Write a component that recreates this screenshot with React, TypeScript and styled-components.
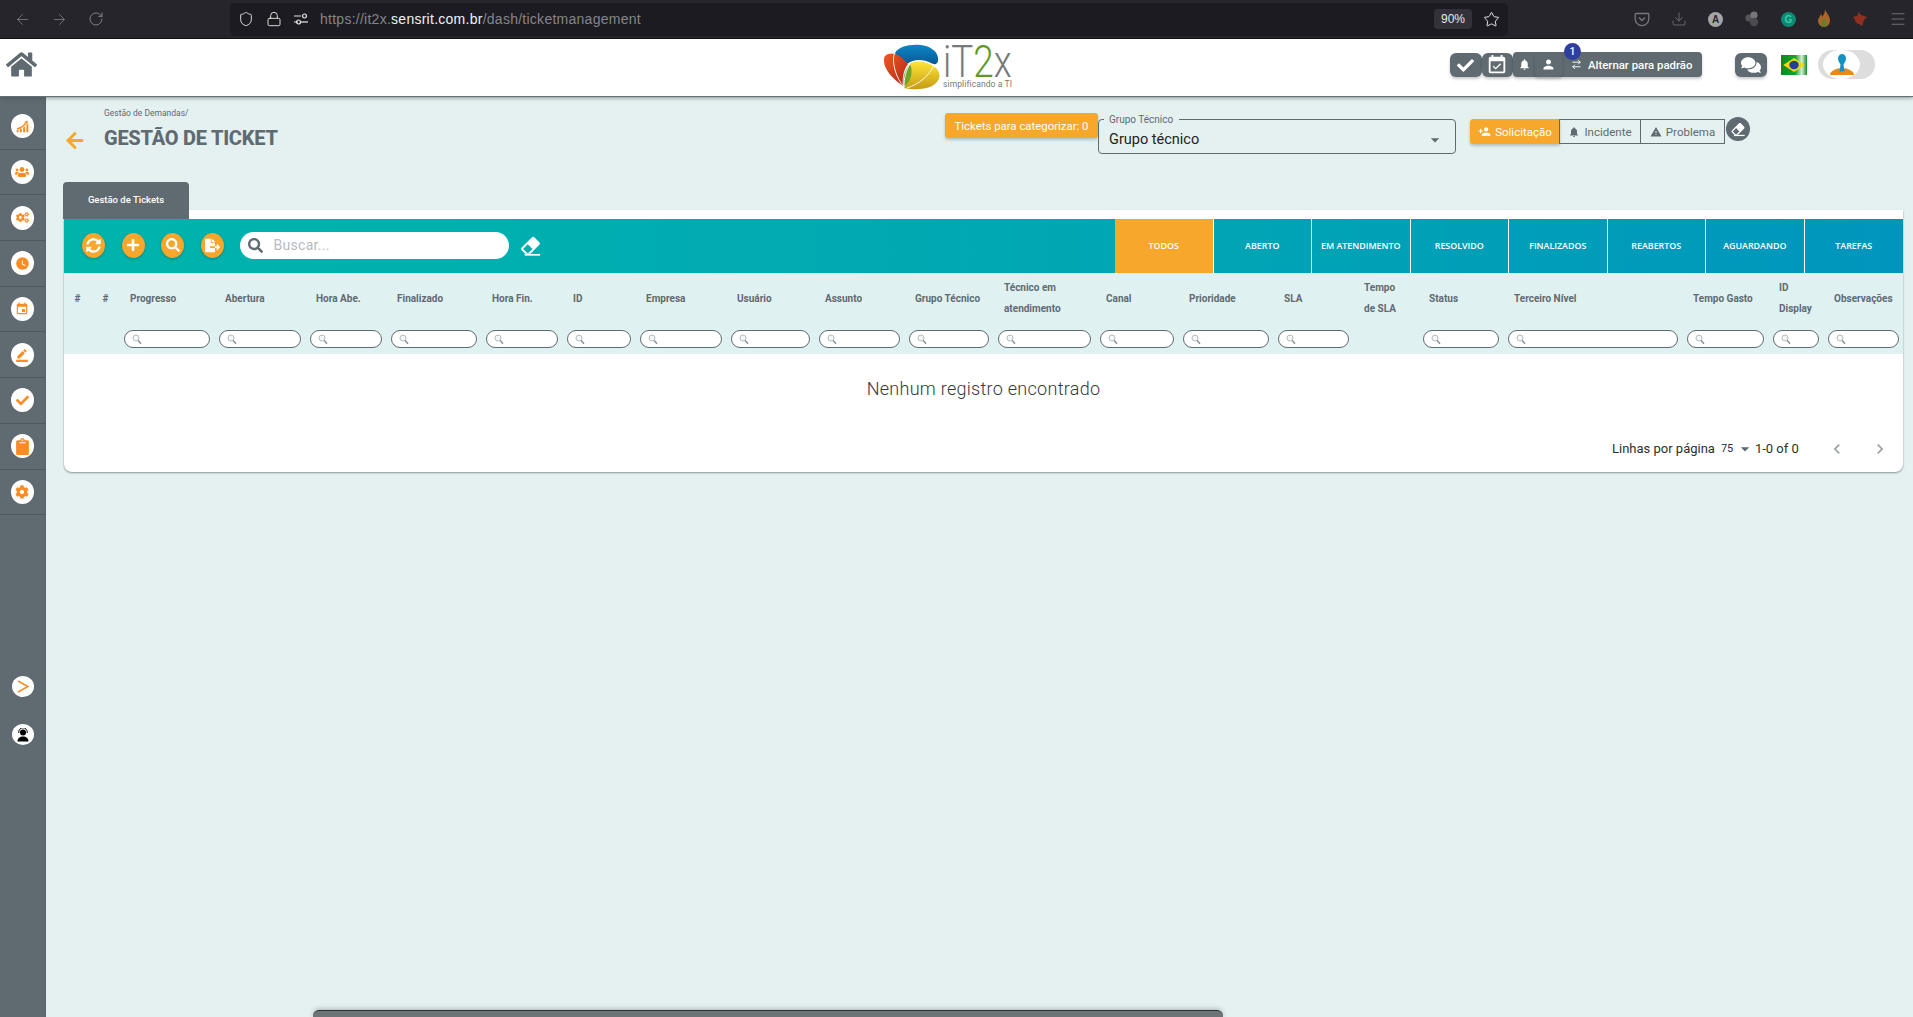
import React from "react";
import styled, { createGlobalStyle } from "styled-components";
import { ArrowLeft, ArrowRight, RotateCw, Shield, Lock, Star, Download, Menu, ArrowRightLeft } from "lucide-react";
import { FaHome, FaUsers, FaCogs, FaClipboard, FaCog, FaSyncAlt, FaPlus, FaSearch, FaFileExport, FaComments, FaCheck } from "react-icons/fa";
import { MdWatchLater, MdEvent, MdBorderColor, MdEventAvailable, MdNotifications, MdPerson, MdPersonAdd, MdWarning, MdArrowDropDown, MdChevronLeft, MdChevronRight } from "react-icons/md";
import { GiProgression } from "react-icons/gi";

const Global = createGlobalStyle`
  html, body { margin: 0; padding: 0; height: 100%; background: #e5f1f0; }
  body { font-family: Roboto, "Liberation Sans", sans-serif; overflow: hidden; }
  * { box-sizing: border-box; }
`;

const Page = styled.div`
  position: relative;
  width: 1913px;
  height: 1017px;
  display: flex;
  flex-direction: column;
  overflow: hidden;
`;

/* browser chrome */
const Chrome = styled.div`
  height: 39px;
  flex: none;
  background: #25252b;
  border-bottom: 1px solid #0b0b0d;
  display: flex;
  align-items: center;
  color: #77777d;
`;
const NavIcons = styled.div`
  width: 230px;
  flex: none;
  padding-left: 14px;
  display: flex;
  gap: 20px;
  align-items: center;
`;
const UrlBar = styled.div`
  width: 1278px;
  height: 33px;
  flex: none;
  background: #1c1b22;
  border-radius: 5px;
  display: flex;
  align-items: center;
  padding: 0 8px 0 8px;
  color: #e6e6ea;
`;
const UrlIcons = styled.div`
  display: flex;
  align-items: center;
  gap: 12px;
  margin-right: 12px;
`;
const UrlText = styled.span`
  font-family: "Liberation Sans", sans-serif;
  font-size: 14px;
  letter-spacing: 0.26px;
  color: #85858b;
  & b { font-weight: 400; color: #f2f2f4; }
`;
const ZoomBadge = styled.span`
  margin-left: auto;
  width: 38px;
  height: 20px;
  border-radius: 4px;
  background: #33323a;
  color: #e8e8ea;
  font-family: "Liberation Sans", sans-serif;
  font-size: 12px;
  display: flex;
  align-items: center;
  justify-content: center;
  margin-right: 11px;
`;
const Extensions = styled.div`
  flex: 1;
  padding-left: 126px;
  display: flex;
  align-items: center;
  gap: 21px;
`;
const ExtA = styled.span`
  width: 15px;
  height: 15px;
  border-radius: 50%;
  background: #a5a5a8;
  color: #26262b;
  font: 700 10px "Liberation Sans", sans-serif;
  display: flex;
  align-items: center;
  justify-content: center;
`;
const ExtG = styled(ExtA)`
  background: #0c8a74;
  color: #3ec7a8;
`;

/* app header */
const Header = styled.header`
  height: 58px;
  flex: none;
  background: #fff;
  border-bottom: 1px solid #666f75;
  box-shadow: 0 1px 4px rgba(60, 70, 75, 0.55);
  display: flex;
  align-items: flex-start;
  position: relative;
  z-index: 3;
  color: #5f6a71;
`;
const Home = styled.div`
  width: 31px;
  height: 26px;
  margin: 10px 0 0 6px;
  flex: none;
  display: flex;
`;
const LogoWrap = styled.div`
  margin: 5px 0 0 847px;
  display: flex;
  flex: none;
  height: 46px;
`;
const LogoText = styled.div`
  margin-left: 2px;
  width: 68px;
  display: flex;
  flex-direction: column;
`;
const LogoWord = styled.div`
  font: 300 45px/35px Roboto, sans-serif;
  color: #777a7b;
  height: 35px;
  white-space: nowrap;
  transform: scaleX(0.82);
  transform-origin: left center;
  & em { font-style: normal; color: #5f9a1e; }
`;
const LogoSub = styled.div`
  font: 400 8.5px/10px Roboto, sans-serif;
  color: #77797a;
  white-space: nowrap;
  letter-spacing: 0.1px;
`;
const HeaderRight = styled.div`
  margin-left: auto;
  flex: none;
  padding-right: 38px;
  display: flex;
  align-items: flex-start;
`;
const Square = styled.div`
  width: 31.5px;
  height: 24px;
  margin-top: 14px;
  flex: none;
  background: #5f6a71;
  border-radius: 6px;
  color: #fff;
  display: flex;
  align-items: center;
  justify-content: center;
  box-shadow: 0 2px 3px rgba(0, 0, 0, 0.22);
`;
const Split = styled.div`
  position: relative;
  margin-top: 13px;
  height: 25px;
  flex: none;
  display: flex;
  background: #5f6a71;
  border-radius: 4px;
  color: #fff;
  box-shadow: 0 2px 3px rgba(0, 0, 0, 0.22);
`;
const SplitCell = styled.div<{ $w: number }>`
  width: ${(p) => p.$w}px;
  display: flex;
  align-items: center;
  justify-content: center;
  border-radius: 4px;
  box-shadow: ${(p) => (p.$w === 27 ? "0 2px 3px rgba(0,0,0,.18)" : "none")};
`;
const SwapCell = styled.div`
  width: 140px;
  display: flex;
  align-items: center;
  padding-left: 9px;
  gap: 6px;
  font-size: 11.4px;
  font-weight: 500;
  white-space: nowrap;
`;
const Badge = styled.span`
  position: absolute;
  left: 51px;
  top: -9px;
  width: 17px;
  height: 17px;
  border-radius: 50%;
  background: #303f9f;
  color: #fff;
  font-size: 10.5px;
  font-weight: 500;
  display: flex;
  align-items: center;
  justify-content: center;
`;
const ChatButton = styled(Square)`
  margin-left: 33px;
  width: 32px;
`;
const Flag = styled.div`
  width: 26px;
  height: 20px;
  margin: 16px 0 0 14px;
  display: flex;
  flex: none;
`;
const AvatarPill = styled.div`
  width: 57px;
  height: 29px;
  margin: 11px 0 0 11px;
  border-radius: 15px;
  background: #dddddd;
  display: flex;
  padding-left: 5px;
  flex: none;
`;
const AvatarFace = styled.div`
  width: 37px;
  height: 29px;
  background: #fff;
  border-radius: 50%;
  display: flex;
  align-items: center;
  justify-content: center;
`;

/* layout */
const Body = styled.div`
  flex: 1;
  display: flex;
  min-height: 0;
`;
const Sidebar = styled.aside`
  width: 46px;
  flex: none;
  background: #5f6a71;
  border-right: 1px solid #57626a;
  padding-top: 7px;
  display: flex;
  flex-direction: column;
`;
const SideItem = styled.div`
  height: 45.7px;
  flex: none;
  border-bottom: 1px solid #4d575e;
  display: flex;
  align-items: center;
  justify-content: center;
  padding-right: 1px;
`;
const SideCircle = styled.div`
  width: 23px;
  height: 24px;
  border-radius: 50%;
  background: #fff;
  color: #fb8c23;
  display: flex;
  align-items: center;
  justify-content: center;
`;
const SideBottom = styled.div`
  margin-top: 161px;
  display: flex;
  flex-direction: column;
  gap: 27px;
  align-items: center;
  padding-left: 1px;
`;
const SideRound = styled(SideCircle)`
  width: 22px;
  height: 21px;
`;
const Main = styled.main`
  flex: 1;
  min-width: 0;
  padding: 0 10px 0 18px;
`;
const TopRow = styled.div`
  height: 85px;
  display: flex;
  align-items: flex-start;
  padding-right: 153px;
`;
const BackArrow = styled.div`
  width: 24px;
  margin: 31px 0 0 -1px;
  color: #f6a72c;
  display: flex;
  flex: none;
`;
const TitleBlock = styled.div`
  margin: 11px 0 0 17px;
  display: flex;
  flex-direction: column;
  color: #5f6a71;
`;
const Crumb = styled.div`
  font-size: 8.5px;
  line-height: 11px;
  white-space: nowrap;
`;
const Title = styled.h1`
  margin: 6px 0 0;
  font-size: 20px;
  line-height: 26px;
  font-weight: 800;
  white-space: nowrap;
  letter-spacing: -0.25px;
`;
const RightTools = styled.div`
  margin-left: auto;
  display: flex;
  align-items: flex-start;
`;
const Chip = styled.div`
  margin-top: 16px;
  width: 153px;
  height: 25px;
  background: #f6a72c;
  color: #fff;
  font-size: 11.4px;
  font-weight: 400;
  border-radius: 3px;
  display: flex;
  align-items: center;
  justify-content: center;
  white-space: nowrap;
  box-shadow: 0 2px 3px rgba(0, 0, 0, 0.2);
`;
const SelectBox = styled.div`
  position: relative;
  margin-top: 22px;
  width: 358px;
  height: 35px;
  border: 1px solid #5f6a71;
  border-radius: 4px;
  display: flex;
  align-items: center;
  padding: 6px 10px 0 10px;
  font-size: 14.5px;
  color: #222;
  justify-content: space-between;
`;
const SelectLegend = styled.span`
  position: absolute;
  left: 5px;
  top: -6px;
  padding: 0 6px 0 5px;
  background: #e5f1f0;
  font-size: 10px;
  line-height: 11px;
  color: #5f6a71;
  letter-spacing: 0;
`;
const Segments = styled.div`
  margin: 22px 0 0 14px;
  height: 25px;
  display: flex;
`;
const Segment = styled.div<{ $on?: boolean; $w: number }>`
  width: ${(p) => p.$w}px;
  display: flex;
  align-items: center;
  justify-content: center;
  gap: 4px;
  font-size: 11.5px;
  white-space: nowrap;
  color: ${(p) => (p.$on ? "#fff" : "#5f6a71")};
  background: ${(p) => (p.$on ? "#f6a72c" : "transparent")};
  border: 1px solid ${(p) => (p.$on ? "#f6a72c" : "#5f6a71")};
  margin-left: ${(p) => (p.$on ? "0" : "-1px")};
  border-radius: ${(p) => (p.$on ? "3px 0 0 3px" : "0")};
  box-shadow: ${(p) => (p.$on ? "0 2px 3px rgba(0,0,0,.2)" : "none")};
`;
const RoundEraser = styled.div`
  margin: 20px 0 0 1px;
  width: 24px;
  height: 24px;
  border-radius: 50%;
  background: #5f6a71;
  color: #fff;
  display: flex;
  align-items: center;
  justify-content: center;
`;
const TabHead = styled.div`
  position: relative;
  z-index: 1;
  width: 126px;
  height: 37px;
  margin-left: -1px;
  padding-bottom: 2px;
  background: #5f6a71;
  border-radius: 4px 4px 0 0;
  color: #fff;
  font-size: 9.5px;
  font-weight: 500;
  display: flex;
  align-items: center;
  justify-content: center;
`;
const Card = styled.section`
  margin-top: -9px;
  padding-top: 9px;
  background: #fff;
  border-radius: 0 0 8px 8px;
  box-shadow: 0 1px 2px rgba(60, 70, 75, 0.55);
`;
const Toolbar = styled.div`
  height: 54px;
  display: flex;
  background: linear-gradient(90deg, #00b4ac 0%, #00a6b4 60%, #0095bd 100%);
`;
const Actions = styled.div`
  flex: 1;
  display: flex;
  align-items: center;
  padding: 0 0 2px 18px;
`;
const RoundBtn = styled.div`
  width: 23px;
  height: 25px;
  margin-right: 16.5px;
  border-radius: 50%;
  background: #f6a72c;
  color: #fff;
  display: flex;
  align-items: center;
  justify-content: center;
  flex: none;
  box-shadow: 0 1px 3px rgba(0, 0, 0, 0.25);
`;
const Search = styled.div`
  width: 269px;
  height: 27px;
  margin: 0 0 0 -0.5px;
  border-radius: 14px;
  background: #fff;
  display: flex;
  align-items: center;
  padding-left: 8px;
  gap: 11px;
  color: #5f6a71;
  font-size: 14px;
`;
const SearchHint = styled.span`
  color: #b7bbbf;
  letter-spacing: 0.3px;
`;
const EraserBtn = styled.div`
  margin-left: 10px;
  color: #fff;
  display: flex;
`;
const Tabs = styled.div`
  width: 788px;
  flex: none;
  display: grid;
  grid-template-columns: repeat(8, 1fr);
`;
const StatusTab = styled.div<{ $on?: boolean }>`
  display: flex;
  align-items: center;
  justify-content: center;
  padding-bottom: 2px;
  font-family: "Open Sans", sans-serif;
  font-weight: 600;
  font-size: 8.9px;
  color: #fff;
  white-space: nowrap;
  background: ${(p) => (p.$on ? "#f6a72c" : "transparent")};
  border-right: 1px solid #fff;
  &:last-child { border-right: 0; }
`;
const TableHead = styled.div`
  height: 81px;
  background: #e0f1f1;
  display: grid;
  grid-template-columns: 28px 27.5px 95px 91px 81px 95px 81px 73px 91px 88px 90px 89px 102px 83px 95px 80px 65px 85px 179px 86px 55px 80px;
  grid-template-rows: 51px 30px;
`;
const HeadLabel = styled.div`
  padding: 0 0 0 10.5px;
  align-self: center;
  font-size: 10px;
  line-height: 21px;
  font-weight: 700;
  color: #5f6a71;
  margin-top: -1px;
`;
const FilterCell = styled.div`
  padding: 6px 4.5px 0;
`;
const Filter = styled.div`
  height: 18px;
  border: 1px solid #5f6a71;
  border-radius: 9px;
  background: #fff;
  padding-left: 7px;
  display: flex;
  align-items: center;
`;
const EmptyRow = styled.div`
  height: 71px;
  padding-bottom: 2px;
  display: flex;
  align-items: center;
  justify-content: center;
  font-size: 18px;
  font-weight: 300;
  letter-spacing: 0.28px;
  color: #33393d;
`;
const Pagination = styled.div`
  height: 47px;
  display: flex;
  align-items: center;
  padding-left: 1548px;
  font-size: 13px;
  color: #2b2f33;
  white-space: nowrap;
`;
const PageSize = styled.span`
  margin-left: 6px;
  font-size: 11px;
  width: 14px;
`;
const PageCaret = styled.span`
  display: flex;
  color: #5f6a71;
  width: 20px;
`;
const PageArrows = styled.span`
  display: flex;
  margin-left: 28px;
  gap: 23px;
  color: #9aa1a6;
`;
const BottomBar = styled.div`
  position: absolute;
  left: 313px;
  bottom: 0;
  width: 910px;
  height: 7px;
  background: #6c7478;
  border-top: 1px solid #2c3033;
  border-radius: 6px 6px 0 0;
  box-shadow: 0 -1px 5px rgba(60, 70, 75, 0.35);
`;

const Pocket = () => (
  <svg width="16" height="16" viewBox="0 0 16 16" fill="none" stroke="currentColor" strokeWidth="1.3">
    <path d="M2 2.500h12a.8.8 0 0 1 .8.8v4.500a6.800 6.800 0 0 1-13.600 0V3.300a.8.8 0 0 1 .8-.8z" />
    <path d="M5 6.500l3 3 3-3" />
  </svg>
);
const SiteControls = () => (
  <svg width="14" height="12" viewBox="0 0 14 12" fill="none" stroke="currentColor" strokeWidth="1.2">
    <path d="M0 3h7M0 9h4" />
    <path d="M7 9h7" />
    <circle cx="10.500" cy="3" r="2" />
    <circle cx="4.500" cy="9" r="2" />
  </svg>
);
const Dots = () => (
  <svg width="16" height="18" viewBox="0 0 16 18">
    <circle cx="5" cy="8" r="3.600" fill="#55555a" />
    <circle cx="10" cy="5" r="3.600" fill="#77777b" />
    <circle cx="10" cy="12" r="4.200" fill="#4a4a4f" />
  </svg>
);
const Fire = () => (
  <svg width="14" height="20" viewBox="0 0 14 20">
    <path d="M8 0c1 4 5 6 5 12a6 6 0 0 1-12 0c0-3 2-4 3-7 1 1 1 2 1 3 2-2 3-5 3-8z" fill="#a9652a" />
    <path d="M7 9c1 2 3 3 3 6a3 3 0 0 1-6 0c0-2 2-3 3-6z" fill="#6b7d2a" />
  </svg>
);
const Fox = () => (
  <svg width="16" height="16" viewBox="0 0 16 16">
    <path d="M1 6l4-1 2-4 2 3 6 2-3 3-2 6-3-2-3-1-1-3z" fill="#8f3020" />
  </svg>
);

const LogoMark = () => (
  <svg width="57" height="46" viewBox="0 0 57 46">
    <defs>
      <linearGradient id="lb" x1="0" y1="0" x2="0" y2="1">
        <stop offset="0" stopColor="#0a86c8" />
        <stop offset="1" stopColor="#0b5a94" />
      </linearGradient>
      <linearGradient id="lr" x1="0" y1="0" x2="1" y2="1">
        <stop offset="0" stopColor="#ee5a1f" />
        <stop offset="1" stopColor="#b3241a" />
      </linearGradient>
      <linearGradient id="ly" x1="0" y1="0" x2="0" y2="1">
        <stop offset="0" stopColor="#ffe637" />
        <stop offset="1" stopColor="#c69b14" />
      </linearGradient>
    </defs>
    <path d="M11 9C15 1 31-1 42 2c9 3 13 9 12 15-1 4-4 4-9 1-7-3-16-3-22 2-3-4-10-6-12-11z" fill="url(#lb)" />
    <path d="M1 12c4-4 12-3 17 2l6 6c-4 5-6 13-5 22C10 36 0 26 0 17c0-2 0-4 1-5z" fill="url(#lr)" />
    <path d="M25 20c8-5 20-2 27 4 6 6 4 13-4 18-8 4-20 4-28 2 5-7 8-15 5-24z" fill="url(#ly)" />
    <path d="M26 20c-5 5-8 14-6 23 6-5 10-14 6-23z" fill="#6fa32b" />
    <path d="M10 10c-2 10 2 24 10 33M23 44c12-4 22-12 27-23M26 20c-4 6-6 14-6 23" fill="none" stroke="#fff" strokeWidth=".9" />
  </svg>
);
const BrFlag = () => (
  <svg width="26" height="20" viewBox="0 0 23 20" preserveAspectRatio="none">
    <defs>
      <linearGradient id="fg" x1="0" y1="0" x2="1" y2="0">
        <stop offset="0" stopColor="#0a8a1e" />
        <stop offset=".55" stopColor="#12a52a" />
        <stop offset=".8" stopColor="#d6efd6" />
        <stop offset="1" stopColor="#0d8c22" />
      </linearGradient>
    </defs>
    <rect width="23" height="20" fill="url(#fg)" />
    <path d="M2 10l9.500-7 9.500 7-9.500 7z" fill="#f2d90f" />
    <circle cx="11.500" cy="10" r="4.200" fill="#24408e" />
  </svg>
);
const AvatarMan = () => (
  <svg width="24" height="21" viewBox="0 0 24 21">
    <path d="M0 21c0-4 6-6 9-7l3 3 3-3c3 1 9 3 9 7z" fill="#e58a1f" />
    <path d="M8 4.500c0-6 8-6 8 0 0 3-2 5-2.500 6l1 7h-5l1-7c-.5-1-2.500-3-2.500-6z" fill="#1392c4" />
  </svg>
);
const EraserGlyph = ({ size }: { size: number }) => (
  <svg width={size} height={size} viewBox="0 0 24 24" fill="currentColor">
    <path d="M16.240 3.560l4.950 4.940c.78.790.78 2.050 0 2.840L12 20.530H6.340L2.810 17c-.78-.790-.78-2.050 0-2.840L13.410 3.560c.79-.780 2.050-.780 2.830 0zM4.220 15.580l3.540 3.530c.78.790 2.040.790 2.830 0l3.530-3.530-4.950-4.950-4.950 4.950z" />
    <rect x="6" y="20.800" width="16" height="1.800" />
  </svg>
);
const HeadsetUser = () => (
  <svg width="14" height="14" viewBox="0 0 14 14" fill="#000">
    <circle cx="7" cy="4.500" r="3" />
    <path d="M1.500 13.500c0-3.500 2.500-5 5.500-5s5.500 1.500 5.500 5z" />
    <path d="M2.800 5V4a4.200 4.200 0 0 1 8.400 0v1" fill="none" stroke="#000" strokeWidth="1" />
  </svg>
);
const Chevron = () => (
  <svg width="12" height="13" viewBox="0 0 12 13" fill="none" stroke="currentColor" strokeWidth="1.600">
    <path d="M1 1l10 5.500L1 12" />
  </svg>
);
const FilterGlass = () => (
  <svg width="10" height="11" viewBox="0 0 10 11" fill="none">
    <circle cx="4" cy="4" r="3" stroke="#b7bcc0" strokeWidth="1" fill="#f3f6f7" />
    <path d="M6.200 6.500L9 9.800" stroke="#8b9297" strokeWidth="1.500" />
  </svg>
);

const sideIcons = [
  <GiProgression size={13} key="a" />,
  <FaUsers size={14} key="b" />,
  <FaCogs size={13} key="c" />,
  <MdWatchLater size={15} key="d" />,
  <MdEvent size={14} key="e" />,
  <MdBorderColor size={14} key="f" />,
  <FaCheck size={13} key="g" />,
  <FaClipboard size={17} key="h" />,
  <FaCog size={14} key="i" />,
];

const statusTabs = ["TODOS", "ABERTO", "EM ATENDIMENTO", "RESOLVIDO", "FINALIZADOS", "REABERTOS", "AGUARDANDO", "TAREFAS"];

const columns: { label: React.ReactNode; filter: boolean }[] = [
  { label: "#", filter: false },
  { label: "#", filter: false },
  { label: "Progresso", filter: true },
  { label: "Abertura", filter: true },
  { label: "Hora Abe.", filter: true },
  { label: "Finalizado", filter: true },
  { label: "Hora Fin.", filter: true },
  { label: "ID", filter: true },
  { label: "Empresa", filter: true },
  { label: "Usuário", filter: true },
  { label: "Assunto", filter: true },
  { label: "Grupo Técnico", filter: true },
  { label: <>Técnico em<br />atendimento</>, filter: true },
  { label: "Canal", filter: true },
  { label: "Prioridade", filter: true },
  { label: "SLA", filter: true },
  { label: <>Tempo<br />de SLA</>, filter: false },
  { label: "Status", filter: true },
  { label: "Terceiro Nível", filter: true },
  { label: "Tempo Gasto", filter: true },
  { label: <>ID<br />Display</>, filter: true },
  { label: "Observações", filter: true },
];

export default function App() {
  return (
    <Page>
      <Global />
      <Chrome>
        <NavIcons>
          <ArrowLeft size={17} strokeWidth={1.3} />
          <ArrowRight size={17} strokeWidth={1.3} />
          <RotateCw size={16} strokeWidth={1.3} color="#8e8e94" />
        </NavIcons>
        <UrlBar>
          <UrlIcons>
            <Shield size={16} strokeWidth={1.4} />
            <Lock size={16} strokeWidth={1.4} />
            <SiteControls />
          </UrlIcons>
          <UrlText>https://it2x.<b>sensrit.com.br</b>/dash/ticketmanagement</UrlText>
          <ZoomBadge>90%</ZoomBadge>
          <Star size={17} strokeWidth={1.4} />
        </UrlBar>
        <Extensions>
          <Pocket />
          <Download size={16} strokeWidth={1.2} />
          <ExtA>A</ExtA>
          <Dots />
          <ExtG>G</ExtG>
          <Fire />
          <Fox />
          <Menu size={18} strokeWidth={1.2} />
        </Extensions>
      </Chrome>

      <Header>
        <Home><FaHome size={31} /></Home>
        <LogoWrap>
          <LogoMark />
          <LogoText>
            <LogoWord>iT<em>2</em>x</LogoWord>
            <LogoSub>simplificando a TI</LogoSub>
          </LogoText>
        </LogoWrap>
        <HeaderRight>
          <Square><FaCheck size={17} /></Square>
          <Square><MdEventAvailable size={22} /></Square>
          <Split>
            <SplitCell $w={22}><MdNotifications size={13} /></SplitCell>
            <SplitCell $w={27}><MdPerson size={15} /></SplitCell>
            <SwapCell><ArrowRightLeft size={11} />Alternar para padrão</SwapCell>
            <Badge>1</Badge>
          </Split>
          <ChatButton><FaComments size={20} /></ChatButton>
          <Flag><BrFlag /></Flag>
          <AvatarPill>
            <AvatarFace><AvatarMan /></AvatarFace>
          </AvatarPill>
        </HeaderRight>
      </Header>

      <Body>
        <Sidebar>
          {sideIcons.map((icon, i) => (
            <SideItem key={i}><SideCircle>{icon}</SideCircle></SideItem>
          ))}
          <SideBottom>
            <SideRound><Chevron /></SideRound>
            <SideRound><HeadsetUser /></SideRound>
          </SideBottom>
        </Sidebar>
        <Main>
          <TopRow>
            <BackArrow><ArrowLeft size={25} strokeWidth={3} /></BackArrow>
            <TitleBlock>
              <Crumb>Gestão de Demandas/</Crumb>
              <Title>GESTÃO DE TICKET</Title>
            </TitleBlock>
            <RightTools>
              <Chip>Tickets para categorizar: 0</Chip>
              <SelectBox>
                <SelectLegend>Grupo Técnico</SelectLegend>
                Grupo técnico
                <MdArrowDropDown size={20} color="#5f6a71" />
              </SelectBox>
              <Segments>
                <Segment $on $w={90}><MdPersonAdd size={13} />Solicitação</Segment>
                <Segment $w={82}><MdNotifications size={12} />Incidente</Segment>
                <Segment $w={85}><MdWarning size={12} />Problema</Segment>
              </Segments>
              <RoundEraser><EraserGlyph size={16} /></RoundEraser>
            </RightTools>
          </TopRow>
          <TabHead>Gestão de Tickets</TabHead>
          <Card>
            <Toolbar>
              <Actions>
                <RoundBtn><FaSyncAlt size={15} /></RoundBtn>
                <RoundBtn><FaPlus size={14} /></RoundBtn>
                <RoundBtn><FaSearch size={14} /></RoundBtn>
                <RoundBtn><FaFileExport size={15} /></RoundBtn>
                <Search>
                  <FaSearch size={15} />
                  <SearchHint>Buscar...</SearchHint>
                </Search>
                <EraserBtn><EraserGlyph size={23} /></EraserBtn>
              </Actions>
              <Tabs>
                {statusTabs.map((t, i) => (
                  <StatusTab key={t} $on={i === 0}>{t}</StatusTab>
                ))}
              </Tabs>
            </Toolbar>
            <TableHead>
              {columns.map((c, i) => (
                <HeadLabel key={i}>{c.label}</HeadLabel>
              ))}
              {columns.map((c, i) => (
                <FilterCell key={i}>
                  {c.filter && <Filter><FilterGlass /></Filter>}
                </FilterCell>
              ))}
            </TableHead>
            <EmptyRow>Nenhum registro encontrado</EmptyRow>
            <Pagination>
              Linhas por página
              <PageSize>75</PageSize>
              <PageCaret><MdArrowDropDown size={20} /></PageCaret>
              1-0 of 0
              <PageArrows>
                <MdChevronLeft size={20} />
                <MdChevronRight size={20} />
              </PageArrows>
            </Pagination>
          </Card>
        </Main>
      </Body>
      <BottomBar />
    </Page>
  );
}
